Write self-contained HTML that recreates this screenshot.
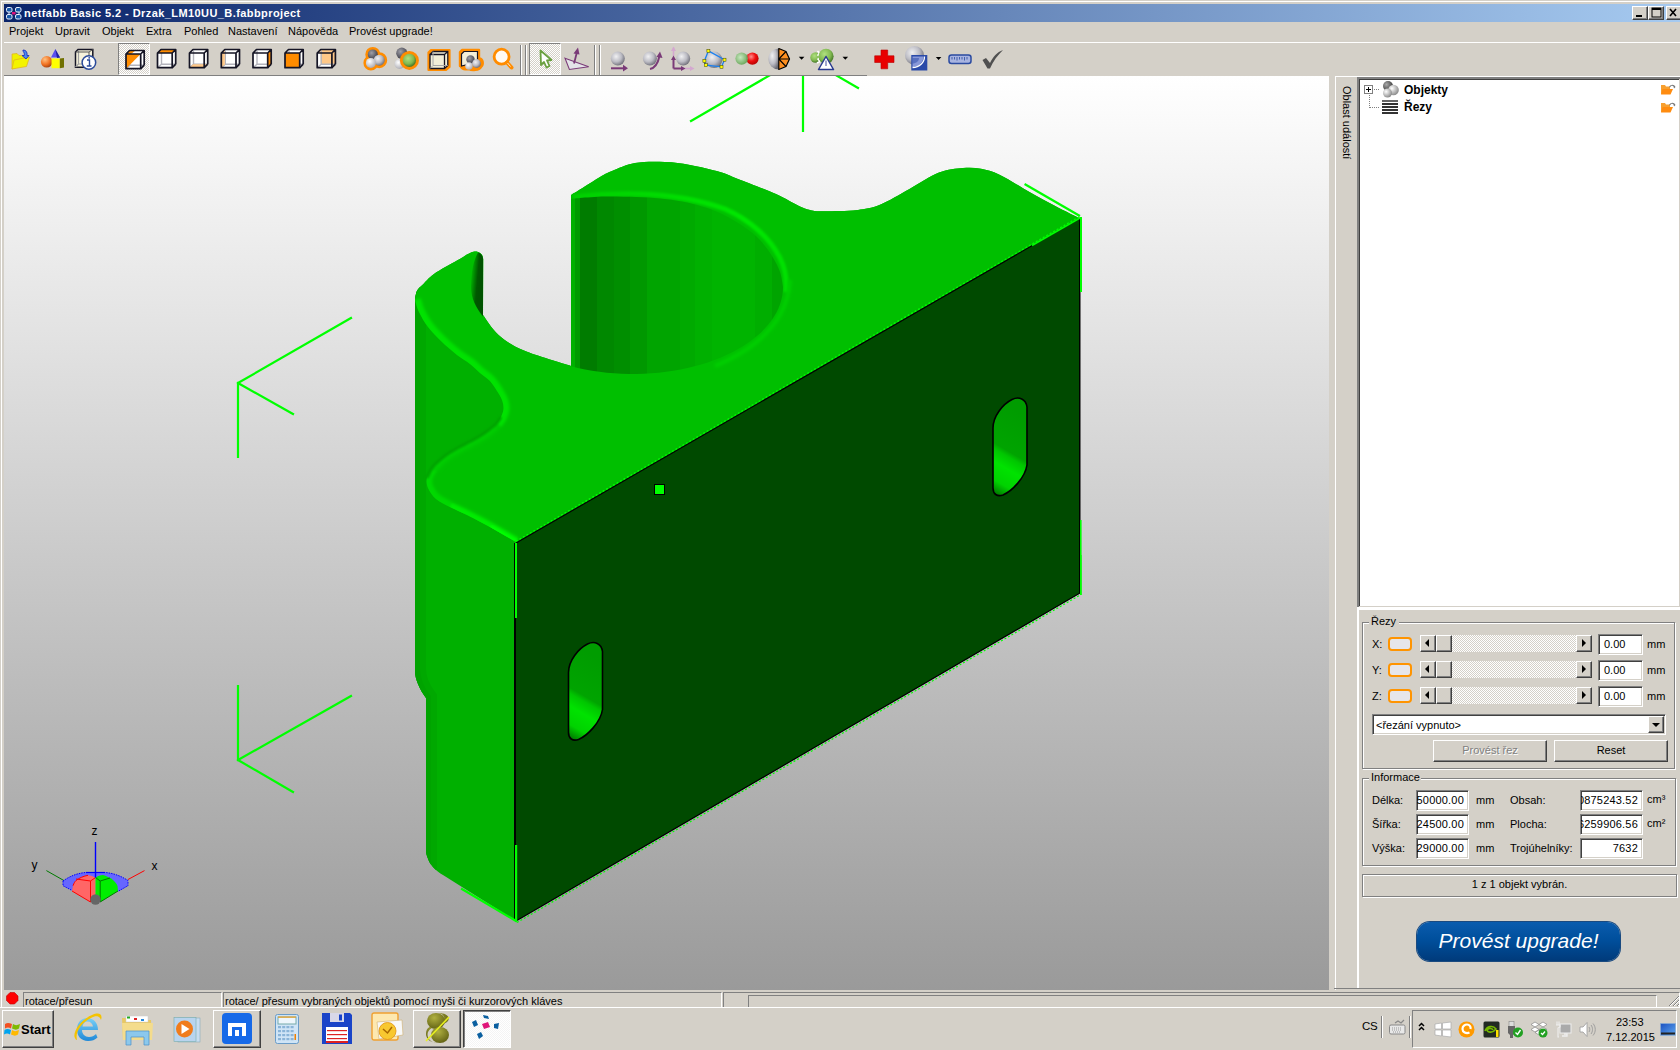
<!DOCTYPE html>
<html><head><meta charset="utf-8">
<style>
*{margin:0;padding:0;box-sizing:border-box}
html,body{width:1680px;height:1050px;overflow:hidden;background:#d4d0c8;font-family:"Liberation Sans",sans-serif;font-size:11px;color:#000}
.a{position:absolute}
.t{position:absolute;white-space:nowrap;line-height:13px}
#title{left:4px;top:4px;width:1676px;height:18px;background:linear-gradient(to right,#0a246a 0%,#a6caf0 100%)}
.tb{position:absolute;top:6px;width:16px;height:14px;background:#d4d0c8;border-top:1px solid #fff;border-left:1px solid #fff;border-right:1px solid #404040;border-bottom:1px solid #404040;box-shadow:inset -1px -1px 0 #808080}
.sunk{border-top:1px solid #808080;border-left:1px solid #808080;border-right:1px solid #fff;border-bottom:1px solid #fff}
.field{position:absolute;background:#fff;border-top:1px solid #808080;border-left:1px solid #808080;border-right:1px solid #fff;border-bottom:1px solid #fff;box-shadow:inset 1px 1px 0 #404040, inset -1px -1px 0 #d4d0c8}
.grp{position:absolute;border:1px solid #808080;box-shadow:1px 1px 0 #fff, inset 1px 1px 0 #fff}
.btn{position:absolute;background:#d4d0c8;border-top:1px solid #fff;border-left:1px solid #fff;border-right:1px solid #404040;border-bottom:1px solid #404040;box-shadow:inset -1px -1px 0 #808080;text-align:center}
</style></head><body>
<!-- outer frame -->
<div class="a" style="left:1px;top:1px;width:1679px;height:1px;background:#fff"></div>
<div class="a" style="left:1px;top:1px;width:1px;height:1007px;background:#fff"></div>
<!-- title bar -->
<div id="title" class="a"></div>
<div class="t" style="left:24px;top:6px;color:#fff;font-weight:bold;font-size:11px;line-height:15px;letter-spacing:0.42px">netfabb Basic 5.2 - Drzak_LM10UU_B.fabbproject</div>
<svg class="a" style="left:5px;top:6px" width="18" height="15" viewBox="0 0 18 15"><g fill="#1a5aa8" stroke="#e8f0ff" stroke-width="1"><rect x="1.5" y="1.5" width="5.5" height="4.5" rx="1.5"/><rect x="10.5" y="1.5" width="5.5" height="4.5" rx="1.5"/><rect x="1.5" y="8.5" width="5.5" height="4.5" rx="1.5"/><rect x="10.5" y="8.5" width="5.5" height="4.5" rx="1.5"/></g><path d="M4,6 L4,8.5 M14,6 L14,8.5" stroke="#e8f0ff" stroke-width="1"/><rect x="7" y="6" width="3.5" height="2.5" fill="#e0107a"/></svg>
<div class="tb" style="left:1632px"></div>
<div class="tb" style="left:1648px"></div>
<div class="tb" style="left:1666px"></div>
<svg class="a" style="left:1632px;top:6px" width="48" height="14"><rect x="4" y="9" width="6" height="2" fill="#000"/><rect x="20" y="2" width="9" height="9" fill="none" stroke="#000" stroke-width="1"/><rect x="20" y="2" width="9" height="2" fill="#000"/><path d="M38,3 L44,10 M44,3 L38,10" stroke="#000" stroke-width="1.6"/></svg>
<!-- menu -->
<div class="t" style="left:9px;top:25px">Projekt</div>
<div class="t" style="left:55px;top:25px">Upravit</div>
<div class="t" style="left:102px;top:25px">Objekt</div>
<div class="t" style="left:146px;top:25px">Extra</div>
<div class="t" style="left:184px;top:25px">Pohled</div>
<div class="t" style="left:228px;top:25px">Nastavení</div>
<div class="t" style="left:288px;top:25px">Nápověda</div>
<div class="t" style="left:349px;top:25px">Provést upgrade!</div>
<div class="a" style="left:4px;top:42px;width:1676px;height:1px;background:#fff"></div>
<!-- toolbar --><!--TOOL--><div class="a" style="left:118px;top:43px;width:32px;height:32px;border-top:1px solid #808080;border-left:1px solid #808080;border-right:1px solid #fff;border-bottom:1px solid #fff;background-color:#fff;background-image:conic-gradient(#d4d0c8 25%,#fff 0 50%,#d4d0c8 0 75%,#fff 0);background-size:2px 2px"></div>
<div class="a" style="left:529px;top:43px;width:32px;height:32px;border-top:1px solid #808080;border-left:1px solid #808080;border-right:1px solid #fff;border-bottom:1px solid #fff;background-color:#fff;background-image:conic-gradient(#d4d0c8 25%,#fff 0 50%,#d4d0c8 0 75%,#fff 0);background-size:2px 2px"></div>
<div class="a" style="left:520px;top:45px;width:1px;height:30px;background:#808080;box-shadow:1px 0 0 #fff"></div>
<div class="a" style="left:525px;top:45px;width:1px;height:30px;background:#808080;box-shadow:1px 0 0 #fff"></div>
<div class="a" style="left:594px;top:45px;width:1px;height:30px;background:#808080;box-shadow:1px 0 0 #fff"></div>
<div class="a" style="left:599px;top:45px;width:1px;height:30px;background:#808080;box-shadow:1px 0 0 #fff"></div><svg class="a" style="left:0;top:43px" width="1010" height="32" viewBox="0 43 1010 32"><defs>
<radialGradient id="gs" cx="0.38" cy="0.35" r="0.7"><stop offset="0" stop-color="#f0f0f2"/><stop offset="0.55" stop-color="#bcbcc4"/><stop offset="1" stop-color="#6a6a74"/></radialGradient>
<radialGradient id="gsd" cx="0.38" cy="0.35" r="0.7"><stop offset="0" stop-color="#a0a0a8"/><stop offset="1" stop-color="#3a3a44"/></radialGradient>
<radialGradient id="gsw" cx="0.38" cy="0.35" r="0.7"><stop offset="0" stop-color="#ffffff"/><stop offset="1" stop-color="#a8a8b0"/></radialGradient>
<radialGradient id="ggr" cx="0.4" cy="0.35" r="0.7"><stop offset="0" stop-color="#b0e080"/><stop offset="0.6" stop-color="#80b850"/><stop offset="1" stop-color="#3a6a20"/></radialGradient>
<radialGradient id="ggl" cx="0.4" cy="0.4" r="0.7"><stop offset="0" stop-color="#c8e8c0"/><stop offset="1" stop-color="#60a050"/></radialGradient>
<radialGradient id="grd" cx="0.4" cy="0.35" r="0.7"><stop offset="0" stop-color="#ff9090"/><stop offset="0.5" stop-color="#f01010"/><stop offset="1" stop-color="#b00000"/></radialGradient>
<radialGradient id="gor" cx="0.35" cy="0.3" r="0.75"><stop offset="0" stop-color="#ffc080"/><stop offset="0.6" stop-color="#f07020"/><stop offset="1" stop-color="#a04010"/></radialGradient>
</defs><path d="M126,54 L129.5,50.5 L144.2,50.5 L144.2,65.2 L140.7,68.7 L126,68.7 Z" fill="#fff"/><path d="M130.0,51.5 L130.0,65.2 L143.2,65.2 M126.5,68.2 L130.0,65.2" stroke="#b4b4bc" stroke-width="1.4" fill="none"/><path d="M126,54 L140.7,54 L126,68.7 Z" fill="#ff8c00"/><path d="M126,54 L129.5,50.5 L135.5,50.5 L131,54 Z" fill="#ff8c00"/><path d="M126,54 L140.7,54 L140.7,68.7 L126,68.7 Z M126,54 L129.5,50.5 L144.2,50.5 L144.2,65.2 M140.7,54 L144.2,50.5" stroke="#151525" stroke-width="1.7" fill="none" stroke-linejoin="round"/><path d="M140.7,68.7 L144.2,65.2" stroke="#151525" stroke-width="1.7"/><path d="M157.5,53 L161.0,49.5 L175.7,49.5 L175.7,64.2 L172.2,67.7 L157.5,67.7 Z" fill="#fff"/><path d="M161.5,50.5 L161.5,64.2 L174.7,64.2 M158.0,67.2 L161.5,64.2" stroke="#b4b4bc" stroke-width="1.4" fill="none"/><path d="M157.5,53 L161.0,49.5 L175.7,49.5 L172.2,53 Z" fill="#ff8c00"/><path d="M157.5,53 L172.2,53 L172.2,67.7 L157.5,67.7 Z M157.5,53 L161.0,49.5 L175.7,49.5 L175.7,64.2 M172.2,53 L175.7,49.5" stroke="#151525" stroke-width="1.7" fill="none" stroke-linejoin="round"/><path d="M172.2,67.7 L175.7,64.2" stroke="#151525" stroke-width="1.7"/><path d="M189.5,53 L193.0,49.5 L207.7,49.5 L207.7,64.2 L204.2,67.7 L189.5,67.7 Z" fill="#fff"/><path d="M193.5,50.5 L193.5,64.2 L206.7,64.2 M190.0,67.2 L193.5,64.2" stroke="#b4b4bc" stroke-width="1.4" fill="none"/><path d="M189.5,67.7 L193.0,64.2 L207.7,64.2 L204.2,67.7 Z" fill="#ffc888"/><path d="M189.5,53 L204.2,53 L204.2,67.7 L189.5,67.7 Z M189.5,53 L193.0,49.5 L207.7,49.5 L207.7,64.2 M204.2,53 L207.7,49.5" stroke="#151525" stroke-width="1.7" fill="none" stroke-linejoin="round"/><path d="M204.2,67.7 L207.7,64.2" stroke="#151525" stroke-width="1.7"/><path d="M221.3,53 L224.8,49.5 L239.5,49.5 L239.5,64.2 L236.0,67.7 L221.3,67.7 Z" fill="#fff"/><path d="M225.3,50.5 L225.3,64.2 L238.5,64.2 M221.8,67.2 L225.3,64.2" stroke="#b4b4bc" stroke-width="1.4" fill="none"/><path d="M221.3,53 L224.8,49.5 L224.8,64.2 L221.3,67.7 Z" fill="#ffc888"/><path d="M221.3,53 L236.0,53 L236.0,67.7 L221.3,67.7 Z M221.3,53 L224.8,49.5 L239.5,49.5 L239.5,64.2 M236.0,53 L239.5,49.5" stroke="#151525" stroke-width="1.7" fill="none" stroke-linejoin="round"/><path d="M236.0,67.7 L239.5,64.2" stroke="#151525" stroke-width="1.7"/><path d="M253,53 L256.5,49.5 L271.2,49.5 L271.2,64.2 L267.7,67.7 L253,67.7 Z" fill="#fff"/><path d="M257.0,50.5 L257.0,64.2 L270.2,64.2 M253.5,67.2 L257.0,64.2" stroke="#b4b4bc" stroke-width="1.4" fill="none"/><path d="M267.7,53 L271.2,49.5 L271.2,64.2 L267.7,67.7 Z" fill="#ff8c00"/><path d="M253,53 L267.7,53 L267.7,67.7 L253,67.7 Z M253,53 L256.5,49.5 L271.2,49.5 L271.2,64.2 M267.7,53 L271.2,49.5" stroke="#151525" stroke-width="1.7" fill="none" stroke-linejoin="round"/><path d="M267.7,67.7 L271.2,64.2" stroke="#151525" stroke-width="1.7"/><path d="M285,53 L288.5,49.5 L303.2,49.5 L303.2,64.2 L299.7,67.7 L285,67.7 Z" fill="#fff"/><path d="M289.0,50.5 L289.0,64.2 L302.2,64.2 M285.5,67.2 L289.0,64.2" stroke="#b4b4bc" stroke-width="1.4" fill="none"/><rect x="285" y="53" width="14.7" height="14.7" fill="#ff8c00"/><path d="M285,53 L299.7,53 L299.7,67.7 L285,67.7 Z M285,53 L288.5,49.5 L303.2,49.5 L303.2,64.2 M299.7,53 L303.2,49.5" stroke="#151525" stroke-width="1.7" fill="none" stroke-linejoin="round"/><path d="M299.7,67.7 L303.2,64.2" stroke="#151525" stroke-width="1.7"/><path d="M317.2,53 L320.7,49.5 L335.4,49.5 L335.4,64.2 L331.9,67.7 L317.2,67.7 Z" fill="#fff"/><path d="M317.2,53 L320.7,49.5 L335.4,49.5 L335.4,64.2 L331.9,67.7 L331.9,53 Z" fill="#ffc888"/><rect x="320.7" y="49.5" width="14.7" height="14.7" fill="#ffc888"/><rect x="318.2" y="64.2" width="3.5" height="2.5" fill="#fff"/><rect x="318.2" y="64.2" width="13.7" height="2.5" fill="#fff"/><path d="M321.2,50.5 L321.2,64.2 L334.4,64.2 M317.7,67.2 L321.2,64.2" stroke="#b4b4bc" stroke-width="1.4" fill="none"/><path d="M317.2,53 L331.9,53 L331.9,67.7 L317.2,67.7 Z M317.2,53 L320.7,49.5 L335.4,49.5 L335.4,64.2 M331.9,53 L335.4,49.5" stroke="#151525" stroke-width="1.7" fill="none" stroke-linejoin="round"/><path d="M331.9,67.7 L335.4,64.2" stroke="#151525" stroke-width="1.7"/><path d="M12,54 L17,53.5 L19,55.5 L26,55.5 L26,64 L12,69 Z" fill="#f0f000" stroke="#e0b020" stroke-width="0.7"/><path d="M12,69 L14,60 L29.5,57 L26.5,66.5 Z" fill="#f4f400" stroke="#e0b020" stroke-width="0.7"/><path d="M23,50 C26,50 27.5,52 27,55.5 L29,55.5 L26,59 L22,55.5 L24.3,55.5 C24.5,53 24,52 23,51.5 Z" fill="#4a8af0" stroke="#2030c0" stroke-width="0.9"/><path d="M55.3,49 L60,57.5 L51,57.5 Z" fill="#5a50f0"/><path d="M55.3,49 L60,57.5 L57,58 Z" fill="#2020a0"/><circle cx="46.7" cy="61.8" r="5.8" fill="url(#gor)"/><path d="M51.5,58.5 L59.8,58.5 L59.8,68.2 L51.5,68.2 Z" fill="#ffff00"/><path d="M59.8,58.5 L64,58 L64,67.5 L59.8,68.2 Z" fill="#707000"/><path d="M75.5,52 L78,49.5 L92.8,49.5 L92.8,64.5 L89,67.2 L75.5,67.2 Z" fill="#f6f2dc" stroke="#151525" stroke-width="1.5"/><path d="M78.5,50 L78.5,64 L92,64 M75.5,67 L78.5,64" stroke="#a0a0a0" stroke-width="1.2" fill="none"/><path d="M75.5,52 L89,52 L89,67 M89,52 L92.8,49.5" stroke="#555" stroke-width="1" fill="none"/><circle cx="88.9" cy="62.5" r="6.8" fill="#fff" stroke="#2a4a9a" stroke-width="1.5"/><path d="M87,60 L89.5,60 L89.5,66 M86.8,66 L91.5,66" stroke="#2a4a9a" stroke-width="1.4" fill="none"/><circle cx="89.2" cy="57.8" r="0.9" fill="#2a4a9a"/><g stroke="#ff8c00" stroke-width="5" fill="#ff8c00"><circle cx="372.8" cy="54.4" r="5"/><circle cx="379.2" cy="60.2" r="5.5"/><circle cx="370.9" cy="62.9" r="5"/></g><circle cx="372.8" cy="54.4" r="5" fill="url(#gsd)"/><circle cx="379.2" cy="60.2" r="5.5" fill="url(#gs)"/><circle cx="370.9" cy="62.9" r="5" fill="url(#gsw)"/><circle cx="401.8" cy="53.2" r="5.6" fill="url(#gsd)"/><circle cx="399.5" cy="64" r="5" fill="url(#gsw)"/><circle cx="409.4" cy="60.4" r="9.5" fill="#ff8c00"/><circle cx="409.4" cy="60.4" r="6.6" fill="url(#ggr)"/><path d="M431,50 L449.5,50 L449.5,67 L446,70 L428.5,70 L428.5,52.5 Z" fill="#ff8c00" stroke="#ff8c00" stroke-width="2.2" stroke-linejoin="round"/><path d="M432,51.5 L447.8,51.5 L447.8,65.5 L444.5,68.5 L430,68.5 L430,54.5 Z" fill="#f2eed8"/><path d="M430,54.5 L444.5,54.5 L444.5,68.5 L430,68.5 Z M430,54.5 L433,51.5 L447.8,51.5 L447.8,65.5 L444.5,68.5 M444.5,54.5 L447.8,51.5" stroke="#151525" stroke-width="1.3" fill="none"/><path d="M433,51.5 L433,65.5 L447.8,65.5 M430,68.5 L433,65.5" stroke="#a8a8a8" stroke-width="1" fill="none"/><path d="M462,50 L479,50 L479,58 C483,59 484,64 481,67 C479,70 472,71 469,69 C466,70 461,69 461,66 L460,66 L460,52 Z" fill="#ff8c00" stroke="#ff8c00" stroke-width="2.4" stroke-linejoin="round"/><path d="M461.5,54 L464,51.5 L477.5,51.5 L477.5,62 L461.5,66 Z" fill="#f2eed8" stroke="#151525" stroke-width="1.2"/><circle cx="470.5" cy="59.5" r="4.2" fill="url(#gsd)"/><circle cx="476.5" cy="63.5" r="4.4" fill="url(#gs)"/><circle cx="469" cy="66" r="3.8" fill="url(#gsw)"/><circle cx="501.6" cy="56.7" r="7.5" fill="#fffaf4" stroke="#ff8c00" stroke-width="2.8"/><path d="M507,62.5 L511.5,67.5" stroke="#ff8c00" stroke-width="4" stroke-linecap="round"/><path d="M507.5,63 L510.5,66.5" stroke="#ffe8c8" stroke-width="1"/><path d="M540.5,50.5 L551.5,60 L547,60.5 L549.5,66 L546.5,67.5 L544,62 L541,65 Z" fill="#fff" stroke="#6aa040" stroke-width="1.8" stroke-linejoin="round"/><path d="M565,58.3 L588.7,66.8 L569.4,69.5 Z" fill="#e4e4e8" stroke="#7a3a78" stroke-width="1.1"/><path d="M574,63.5 L577,52" stroke="#7a3a78" stroke-width="1.8"/><path d="M573.5,53.5 L578,47.5 L579.5,54.5 Z" fill="#7a3a78"/><circle cx="617.8" cy="58.6" r="7" fill="url(#gs)"/><path d="M611,68.3 L624,68.3" stroke="#7a3a78" stroke-width="2"/><path d="M623,64.8 L628,68.3 L623,71.5 Z" fill="#7a3a78"/><circle cx="649.9" cy="58.6" r="7" fill="url(#gs)"/><path d="M650,69 C655,68 658,63 659.5,56" stroke="#7a3a78" stroke-width="2" fill="none"/><path d="M656.5,57 L660,51.5 L662.5,58 Z" fill="#7a3a78"/><circle cx="683.2" cy="58.6" r="7" fill="url(#gs)"/><path d="M673.5,47.5 L673.5,56" stroke="#d4a8d0" stroke-width="1.6"/><path d="M671,51 L673.5,46.5 L676,51 Z" fill="#d4a8d0"/><path d="M684,68.5 L691,68.5" stroke="#d4a8d0" stroke-width="1.6"/><path d="M690,66 L694.5,68.5 L690,71 Z" fill="#d4a8d0"/><path d="M673.5,68.5 L673.5,58 M673.5,68.5 L682,68.5" stroke="#7a3a78" stroke-width="2" fill="none"/><path d="M671,60 L673.5,55.5 L676,60 Z M681,66 L685.5,68.5 L681,71 Z" fill="#7a3a78"/><circle cx="714" cy="59.8" r="8.3" fill="url(#gs)"/><path d="M708.4,50.9 L724.5,59.7 L721.5,66.8 L705.8,65.2 L704.4,60.8 Z" fill="none" stroke="#1a80f0" stroke-width="1.3"/><rect x="706.9" y="49.4" width="3" height="3" fill="#ffff00" stroke="#404000" stroke-width="0.5"/><rect x="723.0" y="58.2" width="3" height="3" fill="#ffff00" stroke="#404000" stroke-width="0.5"/><rect x="720.0" y="65.3" width="3" height="3" fill="#ffff00" stroke="#404000" stroke-width="0.5"/><rect x="704.3" y="63.7" width="3" height="3" fill="#ffff00" stroke="#404000" stroke-width="0.5"/><rect x="702.9" y="59.3" width="3" height="3" fill="#ffff00" stroke="#404000" stroke-width="0.5"/><circle cx="752.4" cy="58.6" r="6.2" fill="url(#grd)"/><circle cx="741.6" cy="58.6" r="6.2" fill="url(#ggl)"/><path d="M746.8,55 L746.8,62.5" stroke="#70a060" stroke-width="0.8"/><path d="M778.8,48.5 A10.5,10.5 0 0 0 778.8,69.5 Z" fill="url(#gs)"/><path d="M778.8,48.5 L786,51.5 L789.5,59 L786,66.5 L778.8,69.5 Z" fill="#ff9020" stroke="#000" stroke-width="1.2" stroke-linejoin="round"/><path d="M778.8,59 L789.5,59 M778.8,59 L786,51.5 M778.8,59 L786,66.5" stroke="#000" stroke-width="1.1"/><path d="M798.8,56.8 L804.4,56.8 L801.6,59.8 Z" fill="#000"/><circle cx="815.5" cy="57.5" r="5.2" fill="url(#ggr)"/><path d="M817.5,51 L819.5,53 L818,55 L820.5,57 L818,59 L820,61.5 L817,63" stroke="#fff" stroke-width="1.6" fill="none"/><circle cx="826" cy="56.3" r="7.6" fill="url(#ggr)"/><path d="M826,56.5 L833.5,69.5 L818.5,69.5 Z" fill="#fff" stroke="#2a3a90" stroke-width="1.5" stroke-linejoin="round"/><path d="M826,60.5 L826,66" stroke="#2a3a90" stroke-width="0.9"/><path d="M842.5,56.8 L848.1,56.8 L845.3,59.8 Z" fill="#000"/><path d="M881,50 L887.7,50 L887.7,55.8 L894,55.8 L894,62.5 L887.7,62.5 L887.7,68.8 L881,68.8 L881,62.5 L874.7,62.5 L874.7,55.8 L881,55.8 Z" fill="#e80000" stroke="#b80000" stroke-width="0.6"/><circle cx="914.5" cy="55.4" r="9.5" fill="url(#gs)"/><rect x="911.3" y="55" width="16" height="15.5" fill="#2a4aa8"/><path d="M912.5,56.5 L923.5,56.5 C923.5,62 919,67 912.5,67 Z" fill="#8898d8"/><path d="M912.5,67.5 C919.5,67.5 924.5,62.5 924.5,56.5" stroke="#fff" stroke-width="1.3" fill="none"/><path d="M912.5,58 L919,58 C919,61 916,63.5 912.5,63.5 Z" fill="#2a4aa8" opacity="0.5"/><path d="M935.8,57 L941.4,57 L938.6,60 Z" fill="#000"/><rect x="949" y="55" width="22" height="8.4" rx="2.5" fill="#a8b4e0" stroke="#2a4aa0" stroke-width="1.5"/><path d="M952,57 L952,59.5 M954.5,57 L954.5,59.5 M957,57 L957,60.5 M959.5,57 L959.5,59.5 M962,57 L962,59.5 M964.5,57 L964.5,60.5 M967,57 L967,59.5" stroke="#2a4aa0" stroke-width="0.8"/><path d="M982.5,60 L986,58 L990,63 C993,57 997,52 1003,50 C998,55 993,61 990,68.5 L987.5,68.5 Z" fill="#505050"/></svg><!--/TOOL-->
<!-- toolbar bottom line -->
<div class="a" style="left:4px;top:75px;width:863px;height:1px;background:#808080"></div>

<!-- viewport -->
<!--VP--><svg class="a" style="left:4px;top:76px" width="1325" height="914" viewBox="4 76 1325 914"><defs><linearGradient id="vpbg" x1="0" y1="0" x2="0" y2="1"><stop offset="0" stop-color="#ffffff"/><stop offset="1" stop-color="#9a9a9a"/></linearGradient></defs><rect x="4" y="76" width="1325" height="914" fill="url(#vpbg)"/><defs><clipPath id="silc0"><path d="M415.0,300.0 C415.3,298.5 415.7,293.6 417.0,291.0 C418.3,288.4 420.2,287.4 423.0,284.6 C425.8,281.8 428.3,278.0 434.0,274.0 C439.7,270.0 450.8,264.2 457.0,260.6 C463.2,257.0 467.5,254.0 471.0,252.6 C474.5,251.2 476.2,251.6 478.0,252.0 C479.8,252.4 481.1,253.8 482.0,255.0 C482.9,256.2 483.0,258.3 483.2,259.0 L483,315 C485.6,318.3 491.8,329.1 498.6,335.0 C505.4,340.9 511.9,345.4 524.0,350.6 C536.1,355.8 563.2,363.4 571.0,366.0 L571,195 C573.2,193.7 579.2,190.0 584.0,187.0 C588.8,184.0 595.3,179.7 600.0,177.0 C604.7,174.3 606.2,173.3 612.0,171.0 C617.8,168.7 626.2,164.5 635.0,163.0 C643.8,161.5 655.8,161.7 665.0,162.0 C674.2,162.3 680.8,163.3 690.0,165.0 C699.2,166.7 712.0,169.7 720.0,172.0 C728.0,174.3 728.7,175.3 738.0,179.0 C747.3,182.7 765.8,189.5 776.0,194.0 C786.2,198.5 793.0,203.2 799.0,206.0 C805.0,208.8 808.2,209.6 812.0,210.5 C815.8,211.4 817.3,211.2 822.0,211.3 C826.7,211.4 834.0,211.2 840.0,211.0 C846.0,210.8 851.3,211.0 858.0,210.0 C864.7,209.0 871.4,208.3 880.0,204.8 C888.6,201.3 899.7,194.4 909.5,189.0 C919.3,183.6 930.1,176.1 939.0,172.6 C947.9,169.1 956.0,168.6 963.0,168.0 C970.0,167.4 975.0,167.7 981.0,168.8 C987.0,169.9 992.0,171.3 999.0,174.5 C1006.0,177.7 1014.5,183.4 1023.0,188.2 C1031.5,193.0 1040.5,198.2 1050.0,203.3 C1059.5,208.4 1075.0,216.0 1080.0,218.5 L1080,593 L516,921 L443,875 C436,871 431,866 428.5,860 C427,856 426,854 426,850 L426,698 C423,694 420,689 418,684 C416,679 415,675 415,671 Z"/></clipPath></defs>
<path d="M415.0,300.0 C415.3,298.5 415.7,293.6 417.0,291.0 C418.3,288.4 420.2,287.4 423.0,284.6 C425.8,281.8 428.3,278.0 434.0,274.0 C439.7,270.0 450.8,264.2 457.0,260.6 C463.2,257.0 467.5,254.0 471.0,252.6 C474.5,251.2 476.2,251.6 478.0,252.0 C479.8,252.4 481.1,253.8 482.0,255.0 C482.9,256.2 483.0,258.3 483.2,259.0 L483,315 C485.6,318.3 491.8,329.1 498.6,335.0 C505.4,340.9 511.9,345.4 524.0,350.6 C536.1,355.8 563.2,363.4 571.0,366.0 L571,195 C573.2,193.7 579.2,190.0 584.0,187.0 C588.8,184.0 595.3,179.7 600.0,177.0 C604.7,174.3 606.2,173.3 612.0,171.0 C617.8,168.7 626.2,164.5 635.0,163.0 C643.8,161.5 655.8,161.7 665.0,162.0 C674.2,162.3 680.8,163.3 690.0,165.0 C699.2,166.7 712.0,169.7 720.0,172.0 C728.0,174.3 728.7,175.3 738.0,179.0 C747.3,182.7 765.8,189.5 776.0,194.0 C786.2,198.5 793.0,203.2 799.0,206.0 C805.0,208.8 808.2,209.6 812.0,210.5 C815.8,211.4 817.3,211.2 822.0,211.3 C826.7,211.4 834.0,211.2 840.0,211.0 C846.0,210.8 851.3,211.0 858.0,210.0 C864.7,209.0 871.4,208.3 880.0,204.8 C888.6,201.3 899.7,194.4 909.5,189.0 C919.3,183.6 930.1,176.1 939.0,172.6 C947.9,169.1 956.0,168.6 963.0,168.0 C970.0,167.4 975.0,167.7 981.0,168.8 C987.0,169.9 992.0,171.3 999.0,174.5 C1006.0,177.7 1014.5,183.4 1023.0,188.2 C1031.5,193.0 1040.5,198.2 1050.0,203.3 C1059.5,208.4 1075.0,216.0 1080.0,218.5 L1080,593 L516,921 L443,875 C436,871 431,866 428.5,860 C427,856 426,854 426,850 L426,698 C423,694 420,689 418,684 C416,679 415,675 415,671 Z" fill="#00b000"/>
<g clip-path="url(#silc0)"><path d="M415,280 L415,668 C415,675 416,679 418,684 C420,689 423,694 426,698 L426,870" fill="none" stroke="#00a800" stroke-width="22"/><path d="M415,280 L415,668 C415,675 416,679 418,684 C420,689 423,694 426,698 L426,870" fill="none" stroke="#00a300" stroke-width="10"/></g>
<path d="M516,542 C511.7,539.5 498.5,531.7 490.0,527.0 C481.5,522.3 471.7,517.3 465.0,514.0 C458.3,510.7 454.8,509.5 450.0,507.0 C445.2,504.5 439.7,502.2 436.0,499.0 C432.3,495.8 429.5,491.5 428.0,488.0 C426.5,484.5 426.3,481.3 427.0,478.0 C427.7,474.7 429.8,471.0 432.0,468.0 C434.2,465.0 437.2,462.5 440.0,460.0 C442.8,457.5 445.7,455.2 449.0,453.0 C452.3,450.8 456.5,448.6 460.0,446.7 C463.5,444.8 466.7,443.3 470.0,441.5 C473.3,439.7 477.0,437.8 480.0,436.0 C483.0,434.2 485.3,432.5 488.0,430.5 C490.7,428.5 493.8,426.2 496.0,424.0 C498.2,421.8 499.8,419.5 501.0,417.0 C502.2,414.5 503.3,411.8 503.5,409.0 C503.7,406.2 503.1,403.0 502.0,400.0 C500.9,397.0 499.0,394.2 497.0,391.0 C495.0,387.8 492.8,384.0 490.0,381.0 C487.2,378.0 483.3,375.8 480.0,373.0 C476.7,370.2 473.8,367.0 470.0,364.0 C466.2,361.0 461.8,358.8 457.0,355.0 C452.2,351.2 445.8,345.7 441.0,341.0 C436.2,336.3 431.7,331.8 428.0,327.0 C424.3,322.2 421.2,316.5 419.0,312.0 C416.8,307.5 415.7,302.0 415.0,300.0 C415.3,298.5 415.7,293.6 417.0,291.0 C418.3,288.4 420.2,287.4 423.0,284.6 C425.8,281.8 428.3,278.0 434.0,274.0 C439.7,270.0 450.8,264.2 457.0,260.6 C463.2,257.0 467.5,254.0 471.0,252.6 C474.5,251.2 476.2,251.6 478.0,252.0 C479.8,252.4 481.1,253.8 482.0,255.0 C482.9,256.2 483.0,258.3 483.2,259.0 L483,315 C485.6,318.3 491.8,329.1 498.6,335.0 C505.4,340.9 511.9,345.4 524.0,350.6 C536.1,355.8 563.2,363.4 571.0,366.0 L571,195 C573.2,193.7 579.2,190.0 584.0,187.0 C588.8,184.0 595.3,179.7 600.0,177.0 C604.7,174.3 606.2,173.3 612.0,171.0 C617.8,168.7 626.2,164.5 635.0,163.0 C643.8,161.5 655.8,161.7 665.0,162.0 C674.2,162.3 680.8,163.3 690.0,165.0 C699.2,166.7 712.0,169.7 720.0,172.0 C728.0,174.3 728.7,175.3 738.0,179.0 C747.3,182.7 765.8,189.5 776.0,194.0 C786.2,198.5 793.0,203.2 799.0,206.0 C805.0,208.8 808.2,209.6 812.0,210.5 C815.8,211.4 817.3,211.2 822.0,211.3 C826.7,211.4 834.0,211.2 840.0,211.0 C846.0,210.8 851.3,211.0 858.0,210.0 C864.7,209.0 871.4,208.3 880.0,204.8 C888.6,201.3 899.7,194.4 909.5,189.0 C919.3,183.6 930.1,176.1 939.0,172.6 C947.9,169.1 956.0,168.6 963.0,168.0 C970.0,167.4 975.0,167.7 981.0,168.8 C987.0,169.9 992.0,171.3 999.0,174.5 C1006.0,177.7 1014.5,183.4 1023.0,188.2 C1031.5,193.0 1040.5,198.2 1050.0,203.3 C1059.5,208.4 1075.0,216.0 1080.0,218.5 Z" fill="#00bf00"/>
<defs><linearGradient id="tabw" x1="0.1" y1="0.05" x2="0.75" y2="0.35"><stop offset="0" stop-color="#00bf00"/><stop offset="0.45" stop-color="#008000"/><stop offset="0.75" stop-color="#005800"/><stop offset="1" stop-color="#005200"/></linearGradient></defs>
<path d="M478,252.5 C473,261 471,274 471,287 C471,298 476,308 483,316.5 L483.2,259 C482.5,255 480.5,252.5 478,252.5 Z" fill="url(#tabw)" filter="url(#bl05)" clip-path="url(#silc0)"/>
<defs><clipPath id="borec"><rect x="571" y="150" width="300" height="300"/></clipPath><linearGradient id="bore" gradientUnits="userSpaceOnUse" x1="571" x2="783" y1="0" y2="0"><stop offset="0.0000" stop-color="#00b000"/><stop offset="0.0189" stop-color="#00b000"/><stop offset="0.0189" stop-color="#009a00"/><stop offset="0.0425" stop-color="#009a00"/><stop offset="0.0425" stop-color="#007c00"/><stop offset="0.1203" stop-color="#007c00"/><stop offset="0.1203" stop-color="#008800"/><stop offset="0.2028" stop-color="#008800"/><stop offset="0.2028" stop-color="#008e00"/><stop offset="0.2783" stop-color="#008e00"/><stop offset="0.2783" stop-color="#009800"/><stop offset="0.3585" stop-color="#009800"/><stop offset="0.3585" stop-color="#00a400"/><stop offset="0.5142" stop-color="#00a400"/><stop offset="0.5142" stop-color="#00aa00"/><stop offset="0.5849" stop-color="#00aa00"/><stop offset="0.5849" stop-color="#00b000"/><stop offset="0.6651" stop-color="#00b000"/><stop offset="0.6651" stop-color="#00b400"/><stop offset="0.8679" stop-color="#00b400"/><stop offset="0.8679" stop-color="#00ae00"/><stop offset="0.9481" stop-color="#00ae00"/><stop offset="0.9481" stop-color="#00a400"/><stop offset="1.0000" stop-color="#00a400"/></linearGradient><filter id="bl1" x="-10%" y="-10%" width="120%" height="120%"><feGaussianBlur stdDeviation="1"/></filter><filter id="bl15" x="-10%" y="-10%" width="120%" height="120%"><feGaussianBlur stdDeviation="1.5"/></filter><filter id="bl2" x="-10%" y="-10%" width="120%" height="120%"><feGaussianBlur stdDeviation="2.2"/></filter><filter id="bl05" x="-10%" y="-10%" width="120%" height="120%"><feGaussianBlur stdDeviation="0.6"/></filter></defs>
<defs><linearGradient id="rimg" gradientUnits="userSpaceOnUse" x1="571" y1="0" x2="790" y2="0"><stop offset="0" stop-color="#00d000"/><stop offset="0.4" stop-color="#00dc00"/><stop offset="0.8" stop-color="#00e800"/><stop offset="1" stop-color="#00e000"/></linearGradient></defs>
<defs><clipPath id="rimc"><path d="M571,150 L871,150 L871,300 L790,300 L760,330 L571,290 Z"/></clipPath></defs>
<path d="M573,197 C590,195 620,193.5 640,194 C670,195 700,200 725,209 C750,220 770,238 780,258 C786,270 787,280 786,292" fill="none" stroke="url(#rimg)" stroke-width="5" filter="url(#bl1)"/>
<path d="M790,280 C788,315 765,345 715,366" fill="none" stroke="#00cf00" stroke-width="4" filter="url(#bl15)"/>
<path d="M571.0,199.0 C572.5,198.8 574.3,198.4 580.0,198.0 C585.7,197.6 595.7,196.7 605.0,196.5 C614.3,196.3 626.8,196.7 636.0,197.0 C645.2,197.3 652.3,197.8 660.0,198.5 C667.7,199.2 675.0,200.2 682.0,201.5 C689.0,202.8 695.7,204.6 702.0,206.5 C708.3,208.4 713.2,209.8 720.0,213.0 C726.8,216.2 736.3,221.5 743.0,226.0 C749.7,230.5 755.2,235.0 760.0,240.0 C764.8,245.0 768.7,250.7 772.0,256.0 C775.3,261.3 778.2,266.8 780.0,272.0 C781.8,277.2 782.5,284.5 783.0,287.0 L783.0,287.0 L782.8,291.3 L782.3,295.7 L781.3,300.0 L780.0,304.3 L778.4,308.5 L776.3,312.7 L773.9,316.8 L771.2,320.8 L768.1,324.8 L764.7,328.6 L761.0,332.4 L756.9,336.1 L752.5,339.6 L747.8,343.0 L742.9,346.2 L737.6,349.3 L732.2,352.3 L726.4,355.1 L720.4,357.7 L714.3,360.1 L707.9,362.4 L701.3,364.5 L694.5,366.3 L687.6,368.0 L680.6,369.5 L673.4,370.8 L666.2,371.8 L658.8,372.7 L651.4,373.3 L644.0,373.8 L636.5,374.0 L629.0,374.0 L621.5,373.7 L614.1,373.3 L606.7,372.7 L599.4,371.8 L592.1,370.7 L585.0,369.4 L577.9,367.9 L571.0,366.2 Z" fill="url(#bore)"/>
<defs><clipPath id="topc"><path d="M516,542 C511.7,539.5 498.5,531.7 490.0,527.0 C481.5,522.3 471.7,517.3 465.0,514.0 C458.3,510.7 454.8,509.5 450.0,507.0 C445.2,504.5 439.7,502.2 436.0,499.0 C432.3,495.8 429.5,491.5 428.0,488.0 C426.5,484.5 426.3,481.3 427.0,478.0 C427.7,474.7 429.8,471.0 432.0,468.0 C434.2,465.0 437.2,462.5 440.0,460.0 C442.8,457.5 445.7,455.2 449.0,453.0 C452.3,450.8 456.5,448.6 460.0,446.7 C463.5,444.8 466.7,443.3 470.0,441.5 C473.3,439.7 477.0,437.8 480.0,436.0 C483.0,434.2 485.3,432.5 488.0,430.5 C490.7,428.5 493.8,426.2 496.0,424.0 C498.2,421.8 499.8,419.5 501.0,417.0 C502.2,414.5 503.3,411.8 503.5,409.0 C503.7,406.2 503.1,403.0 502.0,400.0 C500.9,397.0 499.0,394.2 497.0,391.0 C495.0,387.8 492.8,384.0 490.0,381.0 C487.2,378.0 483.3,375.8 480.0,373.0 C476.7,370.2 473.8,367.0 470.0,364.0 C466.2,361.0 461.8,358.8 457.0,355.0 C452.2,351.2 445.8,345.7 441.0,341.0 C436.2,336.3 431.7,331.8 428.0,327.0 C424.3,322.2 421.2,316.5 419.0,312.0 C416.8,307.5 415.7,302.0 415.0,300.0 C415.3,298.5 415.7,293.6 417.0,291.0 C418.3,288.4 420.2,287.4 423.0,284.6 C425.8,281.8 428.3,278.0 434.0,274.0 C439.7,270.0 450.8,264.2 457.0,260.6 C463.2,257.0 467.5,254.0 471.0,252.6 C474.5,251.2 476.2,251.6 478.0,252.0 C479.8,252.4 481.1,253.8 482.0,255.0 C482.9,256.2 483.0,258.3 483.2,259.0 L483,315 C485.6,318.3 491.8,329.1 498.6,335.0 C505.4,340.9 511.9,345.4 524.0,350.6 C536.1,355.8 563.2,363.4 571.0,366.0 L571,195 C573.2,193.7 579.2,190.0 584.0,187.0 C588.8,184.0 595.3,179.7 600.0,177.0 C604.7,174.3 606.2,173.3 612.0,171.0 C617.8,168.7 626.2,164.5 635.0,163.0 C643.8,161.5 655.8,161.7 665.0,162.0 C674.2,162.3 680.8,163.3 690.0,165.0 C699.2,166.7 712.0,169.7 720.0,172.0 C728.0,174.3 728.7,175.3 738.0,179.0 C747.3,182.7 765.8,189.5 776.0,194.0 C786.2,198.5 793.0,203.2 799.0,206.0 C805.0,208.8 808.2,209.6 812.0,210.5 C815.8,211.4 817.3,211.2 822.0,211.3 C826.7,211.4 834.0,211.2 840.0,211.0 C846.0,210.8 851.3,211.0 858.0,210.0 C864.7,209.0 871.4,208.3 880.0,204.8 C888.6,201.3 899.7,194.4 909.5,189.0 C919.3,183.6 930.1,176.1 939.0,172.6 C947.9,169.1 956.0,168.6 963.0,168.0 C970.0,167.4 975.0,167.7 981.0,168.8 C987.0,169.9 992.0,171.3 999.0,174.5 C1006.0,177.7 1014.5,183.4 1023.0,188.2 C1031.5,193.0 1040.5,198.2 1050.0,203.3 C1059.5,208.4 1075.0,216.0 1080.0,218.5 Z"/></clipPath><clipPath id="silc"><path d="M415.0,300.0 C415.3,298.5 415.7,293.6 417.0,291.0 C418.3,288.4 420.2,287.4 423.0,284.6 C425.8,281.8 428.3,278.0 434.0,274.0 C439.7,270.0 450.8,264.2 457.0,260.6 C463.2,257.0 467.5,254.0 471.0,252.6 C474.5,251.2 476.2,251.6 478.0,252.0 C479.8,252.4 481.1,253.8 482.0,255.0 C482.9,256.2 483.0,258.3 483.2,259.0 L483,315 C485.6,318.3 491.8,329.1 498.6,335.0 C505.4,340.9 511.9,345.4 524.0,350.6 C536.1,355.8 563.2,363.4 571.0,366.0 L571,195 C573.2,193.7 579.2,190.0 584.0,187.0 C588.8,184.0 595.3,179.7 600.0,177.0 C604.7,174.3 606.2,173.3 612.0,171.0 C617.8,168.7 626.2,164.5 635.0,163.0 C643.8,161.5 655.8,161.7 665.0,162.0 C674.2,162.3 680.8,163.3 690.0,165.0 C699.2,166.7 712.0,169.7 720.0,172.0 C728.0,174.3 728.7,175.3 738.0,179.0 C747.3,182.7 765.8,189.5 776.0,194.0 C786.2,198.5 793.0,203.2 799.0,206.0 C805.0,208.8 808.2,209.6 812.0,210.5 C815.8,211.4 817.3,211.2 822.0,211.3 C826.7,211.4 834.0,211.2 840.0,211.0 C846.0,210.8 851.3,211.0 858.0,210.0 C864.7,209.0 871.4,208.3 880.0,204.8 C888.6,201.3 899.7,194.4 909.5,189.0 C919.3,183.6 930.1,176.1 939.0,172.6 C947.9,169.1 956.0,168.6 963.0,168.0 C970.0,167.4 975.0,167.7 981.0,168.8 C987.0,169.9 992.0,171.3 999.0,174.5 C1006.0,177.7 1014.5,183.4 1023.0,188.2 C1031.5,193.0 1040.5,198.2 1050.0,203.3 C1059.5,208.4 1075.0,216.0 1080.0,218.5 L1080,593 L516,921 L443,875 C436,871 431,866 428.5,860 C427,856 426,854 426,850 L426,698 C423,694 420,689 418,684 C416,679 415,675 415,671 Z"/></clipPath></defs>
<g clip-path="url(#topc)"><path d="M415.0,300.0 C415.7,302.0 416.8,307.5 419.0,312.0 C421.2,316.5 424.3,322.2 428.0,327.0 C431.7,331.8 436.2,336.3 441.0,341.0 C445.8,345.7 452.2,351.2 457.0,355.0 C461.8,358.8 466.2,361.0 470.0,364.0 C473.8,367.0 476.7,370.2 480.0,373.0 C483.3,375.8 487.2,378.0 490.0,381.0 C492.8,384.0 495.0,387.8 497.0,391.0 C499.0,394.2 500.9,397.0 502.0,400.0 C503.1,403.0 503.7,406.2 503.5,409.0 C503.3,411.8 502.2,414.5 501.0,417.0 C499.8,419.5 496.8,422.8 496.0,424.0" fill="none" stroke="#00e200" stroke-width="12" filter="url(#bl15)"/></g>
<g clip-path="url(#topc)"><path d="M432.0,468.0 C431.2,469.7 427.7,474.7 427.0,478.0 C426.3,481.3 426.5,484.5 428.0,488.0 C429.5,491.5 432.3,495.8 436.0,499.0 C439.7,502.2 445.2,504.5 450.0,507.0 C454.8,509.5 458.3,510.7 465.0,514.0 C471.7,517.3 481.5,522.3 490.0,527.0 C498.5,531.7 511.7,539.5 516.0,542.0" fill="none" stroke="#00d800" stroke-width="11" filter="url(#bl15)"/></g>
<g clip-path="url(#topc)"><path d="M450.0,507.0 C452.5,508.2 458.3,510.7 465.0,514.0 C471.7,517.3 481.5,522.3 490.0,527.0 C498.5,531.7 511.7,539.5 516.0,542.0" fill="none" stroke="#00ec00" stroke-width="8" filter="url(#bl1)"/></g>
<g clip-path="url(#topc)"><path d="M496.0,424.0 C494.7,425.1 490.7,428.5 488.0,430.5 C485.3,432.5 483.0,434.2 480.0,436.0 C477.0,437.8 473.3,439.7 470.0,441.5 C466.7,443.3 463.5,444.8 460.0,446.7 C456.5,448.6 452.3,450.8 449.0,453.0 C445.7,455.2 442.8,457.5 440.0,460.0 C437.2,462.5 433.3,466.7 432.0,468.0" fill="none" stroke="#00d000" stroke-width="10" filter="url(#bl2)"/></g>
<g clip-path="url(#silc)"><path d="M501.0,417.0 C500.2,418.2 498.2,421.8 496.0,424.0 C493.8,426.2 490.7,428.5 488.0,430.5 C485.3,432.5 483.0,434.2 480.0,436.0 C477.0,437.8 473.3,439.7 470.0,441.5 C466.7,443.3 463.5,444.8 460.0,446.7 C456.5,448.6 452.3,450.8 449.0,453.0 C445.7,455.2 442.8,457.5 440.0,460.0 C437.2,462.5 434.2,465.0 432.0,468.0 C429.8,471.0 427.8,476.3 427.0,478.0" fill="none" stroke="#00a200" stroke-width="3" filter="url(#bl1)"/></g>
<g clip-path="url(#topc)"><path d="M490,527 L516,542" stroke="#00ff00" stroke-width="5" filter="url(#bl1)"/></g>
<path d="M516,543 L1080,218 L1080,593 L516,921 Z" fill="#004a00"/>
<path d="M516,543 L1080,218" stroke="#000" stroke-width="1.2" fill="none"/>
<path d="M516,541.3 L1080,216.3" stroke="#00ff00" stroke-width="1.2" stroke-dasharray="2 2" fill="none"/>
<path d="M516,921 L1080,593" stroke="#000" stroke-width="1.2" fill="none"/>
<path d="M517,922.5 L1081,594.5" stroke="#00ff00" stroke-width="1.2" stroke-dasharray="2 2" fill="none"/>
<rect x="514" y="543" width="2" height="378" fill="#000"/>
<rect x="1079" y="218" width="1.5" height="375" fill="#000"/>
<defs><linearGradient id="slot" gradientUnits="userSpaceOnUse" x1="1031" y1="418.6" x2="989" y2="491.4"><stop offset="0" stop-color="#009c00"/><stop offset="0.47" stop-color="#00a400"/><stop offset="0.53" stop-color="#00c600"/><stop offset="0.66" stop-color="#00e200"/><stop offset="0.85" stop-color="#00d200"/><stop offset="1" stop-color="#007000"/></linearGradient></defs>
<g transform="translate(0,0)"><path d="M993,488 L993,428 C993,416 1003,404 1012,399.5 C1019,396 1026,399 1027,407 L1027,465 C1025,478 1012,491 1003,495 C997,497 993,494 993,488 Z" fill="url(#slot)" stroke="#000" stroke-width="1.6"/></g>
<g transform="translate(-424.5,244.5)"><path d="M993,488 L993,428 C993,416 1003,404 1012,399.5 C1019,396 1026,399 1027,407 L1027,465 C1025,478 1012,491 1003,495 C997,497 993,494 993,488 Z" fill="url(#slot)" stroke="#000" stroke-width="1.6"/></g>
<rect x="515" y="543" width="2" height="75" fill="#00ff00"/>
<rect x="515" y="845" width="2.2" height="77" fill="#00ff00"/>
<rect x="1080" y="217" width="2" height="75" fill="#00ff00"/>
<path d="M1032,245.5 L1080,218" stroke="#00ff00" stroke-width="1.8"/>
<rect x="1080" y="520" width="1.6" height="75" fill="#00ff00"/>
<rect x="1080" y="555" width="1.6" height="40" fill="#00ff00"/>
<path d="M238,383 L351,318 M238,383 L293,414 M238,383 L238,457" stroke="#00ff00" stroke-width="2.2" fill="none" stroke-linecap="square"/>
<path d="M238,760 L351,696 M238,760 L293,792 M238,760 L238,686" stroke="#00ff00" stroke-width="2.2" fill="none" stroke-linecap="square"/>
<path d="M803,56 L691,121 M803,56 L803,131 M803,56 L858,88" stroke="#00ff00" stroke-width="2.2" fill="none" stroke-linecap="square"/>
<path d="M1079,215.5 L1025.5,184.5" stroke="#00ff00" stroke-width="2.2" fill="none" stroke-linecap="square"/>
<path d="M516,921 L462,889" stroke="#00ff00" stroke-width="2.2" fill="none" stroke-linecap="square"/>
<g shape-rendering="crispEdges"><rect x="654" y="484" width="11" height="11" fill="#000"/><rect x="655" y="485" width="9" height="9" fill="#00ff00"/></g><path d="M46.4,870.6 L73,885.7" stroke="#007a00" stroke-width="1"/><path d="M144.5,870.6 L128,879.5" stroke="#ff0000" stroke-width="1"/><path d="M63,881 C70,876 78,873 86,872.5 L105,872.5 C113,873 121,876 128,880.5 L128,885.7 L118,891.4 L95.5,877.6 L72,890.5 L63,885.7 Z" fill="#6666ff"/><path d="M63,881 C70,876 78,873 86,872.5 L105,872.5 C113,873 121,876 128,880.5 L128,885.7 L118,891.4 M63,881 L63,885.7 L72,890.5" stroke="#0000ff" stroke-width="1" fill="none" stroke-dasharray="1.5 1"/><path d="M86,872.5 L105,872.5" stroke="#0000ff" stroke-width="1.2"/><path d="M72,891 L73,885.7 C74,883 75,881.5 76,880.5 C79,878 84,876 88,875.3 C91,875.5 93,876.5 95.5,877.6 L95.5,896 L90.5,902 Z" fill="#ff6666"/><path d="M72,891 L90.5,902 M90.5,881 L90.5,902 M73,885.7 C74,883 75,881.5 76,880.5 C79,878 84,876 88,875.3 M76,879 L90.5,881 L95.5,877.6" stroke="#ff0000" stroke-width="1" fill="none"/><path d="M95.5,877.6 C98,876 100,875 103,875 C106,876 110,877.5 113,880 C115,882 117,884 117.5,886 L118,891 L100.2,902 L95.5,896 Z" fill="#00ee00"/><path d="M118,891 L100.2,902 M100.2,881 L100.2,902 M95.5,877.6 L100.2,881 L110,878" stroke="#007700" stroke-width="1" fill="none"/><path d="M95.5,842 L95.5,877.6" stroke="#0000ff" stroke-width="1.4"/><circle cx="95.5" cy="899.5" r="5.2" fill="#666"/><text x="91.5" y="834.5" font-family="Liberation Sans" font-size="12" fill="#000">z</text><text x="31.5" y="869" font-family="Liberation Sans" font-size="12" fill="#000">y</text><text x="151.5" y="869.5" font-family="Liberation Sans" font-size="12" fill="#000">x</text></svg><!--/VP-->

<!-- right panel --><!--PANEL--><div class="a" style="left:1335px;top:76px;width:1px;height:914px;background:#fff"></div>
<div class="a" style="left:1335px;top:76px;width:345px;height:1px;background:#fff"></div>
<div class="t" style="left:1352px;top:86px;transform-origin:0 0;transform:rotate(90deg);font-size:11px;line-height:11px">Oblast událostí</div>
<div class="a" style="left:1357px;top:77px;width:323px;height:2px;background:#808080"></div>
<div class="a" style="left:1357px;top:77px;width:2px;height:530px;background:#808080"></div>
<div class="a" style="left:1359px;top:79px;width:321px;height:1px;background:#404040"></div>
<div class="a" style="left:1359px;top:79px;width:1px;height:527px;background:#404040"></div>
<div class="a" style="left:1360px;top:80px;width:319px;height:526px;background:#fff"></div>
<div class="a" style="left:1679px;top:79px;width:1px;height:528px;background:#d4d0c8"></div>
<div class="a" style="left:1359px;top:606px;width:321px;height:1px;background:#d4d0c8"></div>
<div class="a" style="left:1364px;top:85px;width:9px;height:9px;border:1px solid #808080;background:#fff"></div>
<div class="a" style="left:1366px;top:89px;width:5px;height:1px;background:#000"></div>
<div class="a" style="left:1368px;top:87px;width:1px;height:5px;background:#000"></div>
<div class="a" style="left:1374px;top:89px;width:5px;height:1px;border-top:1px dotted #808080"></div>
<div class="a" style="left:1369px;top:95px;width:1px;height:13px;border-left:1px dotted #808080"></div>
<div class="a" style="left:1369px;top:107px;width:10px;height:1px;border-top:1px dotted #808080"></div>
<svg class="a" style="left:1382px;top:80px" width="18" height="18" viewBox="0 0 18 18"><defs><radialGradient id="sph" cx="0.35" cy="0.35" r="0.7"><stop offset="0" stop-color="#fff"/><stop offset="1" stop-color="#888"/></radialGradient><radialGradient id="sphd" cx="0.35" cy="0.35" r="0.7"><stop offset="0" stop-color="#aaa"/><stop offset="1" stop-color="#333"/></radialGradient></defs><circle cx="6" cy="6" r="5" fill="url(#sphd)"/><circle cx="11.5" cy="10" r="5.3" fill="url(#sph)"/><circle cx="5.5" cy="13" r="4.5" fill="url(#sph)"/></svg>
<div class="t" style="left:1404px;top:84px;font-weight:bold;font-size:12px;line-height:13px">Objekty</div>
<svg class="a" style="left:1382px;top:100px" width="17" height="15" viewBox="0 0 17 15"><rect x="0" y="0" width="16" height="2" fill="#666"/><rect x="0" y="3" width="16" height="2" fill="#333"/><rect x="0" y="6" width="16" height="2" fill="#333"/><rect x="0" y="9" width="16" height="2" fill="#333"/><rect x="0" y="12" width="16" height="2" fill="#333"/></svg>
<div class="t" style="left:1404px;top:101px;font-weight:bold;font-size:12px;line-height:13px">Řezy</div>
<svg class="a" style="left:1660px;top:83px" width="17" height="13" viewBox="0 0 17 13"><path d="M1,2 L5,2 L6,3.5 L10,3.5 L10,11 L1,11 Z" fill="#f7a030"/><path d="M2.5,6 L13,6 L10.5,11.5 L1,11.5 Z" fill="#ff8c10"/><path d="M9,4 C11,1 14,1 15.5,4 L14,5.5 L13.5,3.5 C12.5,2.5 11,2.5 10,4.5 Z" fill="#777"/></svg>
<svg class="a" style="left:1660px;top:101px" width="17" height="13" viewBox="0 0 17 13"><path d="M1,2 L5,2 L6,3.5 L10,3.5 L10,11 L1,11 Z" fill="#f7a030"/><path d="M2.5,6 L13,6 L10.5,11.5 L1,11.5 Z" fill="#ff8c10"/><path d="M9,4 C11,1 14,1 15.5,4 L14,5.5 L13.5,3.5 C12.5,2.5 11,2.5 10,4.5 Z" fill="#777"/></svg>
<div class="a" style="left:1357px;top:607px;width:323px;height:3px;background:#fff"></div>
<div class="a" style="left:1357px;top:607px;width:2px;height:381px;background:#fff"></div>
<div class="a" style="left:1334px;top:988px;width:346px;height:1px;background:#808080"></div>
<div class="a" style="left:1356px;top:607px;width:1px;height:381px;background:#d4d0c8"></div>
<div class="a" style="left:1362px;top:622px;width:313px;height:147px;border:1px solid #808080;box-shadow:inset 1px 1px 0 #fff, 1px 1px 0 #fff"></div>
<div class="a" style="left:1369px;top:616px;width:30px;height:12px;background:#d4d0c8"></div>
<div class="t" style="left:1371px;top:615px;">Řezy</div>
<div class="t" style="left:1372px;top:638px;">X:</div>
<div class="a" style="left:1388px;top:637px;width:24px;height:14px;border:2px solid #ff9400;border-radius:4px;background:#e6e6ea"></div>
<div class="a" style="left:1420px;top:635px;width:172px;height:17px;background-color:#eae8e4;background-image:conic-gradient(#d4d0c8 25%,#fff 0 50%,#d4d0c8 0 75%,#fff 0);background-size:2px 2px"></div>
<div class="btn" style="left:1420px;top:635px;width:16px;height:17px"></div>
<div class="btn" style="left:1436px;top:635px;width:16px;height:17px"></div>
<div class="btn" style="left:1576px;top:635px;width:16px;height:17px"></div>
<svg class="a" style="left:1425px;top:639px" width="6" height="9"><path d="M4,0 L4,8 L0,4 Z" fill="#000"/></svg>
<svg class="a" style="left:1582px;top:639px" width="6" height="9"><path d="M0,0 L0,8 L4,4 Z" fill="#000"/></svg>
<div class="field" style="left:1598px;top:634px;width:45px;height:21px"></div>
<div class="t" style="left:1604px;top:638px;">0.00</div>
<div class="t" style="left:1647px;top:638px;">mm</div>
<div class="t" style="left:1372px;top:664px;">Y:</div>
<div class="a" style="left:1388px;top:663px;width:24px;height:14px;border:2px solid #ff9400;border-radius:4px;background:#e6e6ea"></div>
<div class="a" style="left:1420px;top:661px;width:172px;height:17px;background-color:#eae8e4;background-image:conic-gradient(#d4d0c8 25%,#fff 0 50%,#d4d0c8 0 75%,#fff 0);background-size:2px 2px"></div>
<div class="btn" style="left:1420px;top:661px;width:16px;height:17px"></div>
<div class="btn" style="left:1436px;top:661px;width:16px;height:17px"></div>
<div class="btn" style="left:1576px;top:661px;width:16px;height:17px"></div>
<svg class="a" style="left:1425px;top:665px" width="6" height="9"><path d="M4,0 L4,8 L0,4 Z" fill="#000"/></svg>
<svg class="a" style="left:1582px;top:665px" width="6" height="9"><path d="M0,0 L0,8 L4,4 Z" fill="#000"/></svg>
<div class="field" style="left:1598px;top:660px;width:45px;height:21px"></div>
<div class="t" style="left:1604px;top:664px;">0.00</div>
<div class="t" style="left:1647px;top:664px;">mm</div>
<div class="t" style="left:1372px;top:690px;">Z:</div>
<div class="a" style="left:1388px;top:689px;width:24px;height:14px;border:2px solid #ff9400;border-radius:4px;background:#e6e6ea"></div>
<div class="a" style="left:1420px;top:687px;width:172px;height:17px;background-color:#eae8e4;background-image:conic-gradient(#d4d0c8 25%,#fff 0 50%,#d4d0c8 0 75%,#fff 0);background-size:2px 2px"></div>
<div class="btn" style="left:1420px;top:687px;width:16px;height:17px"></div>
<div class="btn" style="left:1436px;top:687px;width:16px;height:17px"></div>
<div class="btn" style="left:1576px;top:687px;width:16px;height:17px"></div>
<svg class="a" style="left:1425px;top:691px" width="6" height="9"><path d="M4,0 L4,8 L0,4 Z" fill="#000"/></svg>
<svg class="a" style="left:1582px;top:691px" width="6" height="9"><path d="M0,0 L0,8 L4,4 Z" fill="#000"/></svg>
<div class="field" style="left:1598px;top:686px;width:45px;height:21px"></div>
<div class="t" style="left:1604px;top:690px;">0.00</div>
<div class="t" style="left:1647px;top:690px;">mm</div>
<div class="field" style="left:1372px;top:714px;width:294px;height:21px"></div>
<div class="t" style="left:1376px;top:719px;">&lt;řezání vypnuto&gt;</div>
<div class="btn" style="left:1648px;top:716px;width:16px;height:17px"></div>
<svg class="a" style="left:1652px;top:723px" width="9" height="5"><path d="M0,0 L8,0 L4,4 Z" fill="#000"/></svg>
<div class="btn" style="left:1433px;top:740px;width:114px;height:22px;color:#808080;line-height:19px;text-shadow:1px 1px 0 #fff">Provést řez</div>
<div class="btn" style="left:1554px;top:740px;width:114px;height:22px;line-height:19px">Reset</div>
<div class="a" style="left:1362px;top:778px;width:314px;height:88px;border:1px solid #808080;box-shadow:inset 1px 1px 0 #fff, 1px 1px 0 #fff"></div>
<div class="a" style="left:1369px;top:772px;width:52px;height:12px;background:#d4d0c8"></div>
<div class="t" style="left:1371px;top:771px;">Informace</div>
<div class="t" style="left:1372px;top:794px;">Délka:</div>
<div class="field" style="left:1416px;top:790px;width:53px;height:21px;overflow:hidden"><div class="t" style="right:4px;top:3px;letter-spacing:0.2px">50000.00</div></div>
<div class="t" style="left:1476px;top:794px;">mm</div>
<div class="t" style="left:1510px;top:794px;">Obsah:</div>
<div class="field" style="left:1580px;top:790px;width:63px;height:21px;overflow:hidden"><div class="t" style="right:4px;top:3px;letter-spacing:0.2px">0875243.52</div></div>
<div class="t" style="left:1647px;top:793px;">cm³</div>
<div class="t" style="left:1372px;top:818px;">Šířka:</div>
<div class="field" style="left:1416px;top:814px;width:53px;height:21px;overflow:hidden"><div class="t" style="right:4px;top:3px;letter-spacing:0.2px">24500.00</div></div>
<div class="t" style="left:1476px;top:818px;">mm</div>
<div class="t" style="left:1510px;top:818px;">Plocha:</div>
<div class="field" style="left:1580px;top:814px;width:63px;height:21px;overflow:hidden"><div class="t" style="right:4px;top:3px;letter-spacing:0.2px">6259906.56</div></div>
<div class="t" style="left:1647px;top:817px;">cm²</div>
<div class="t" style="left:1372px;top:842px;">Výška:</div>
<div class="field" style="left:1416px;top:838px;width:53px;height:21px;overflow:hidden"><div class="t" style="right:4px;top:3px;letter-spacing:0.2px">29000.00</div></div>
<div class="t" style="left:1476px;top:842px;">mm</div>
<div class="t" style="left:1510px;top:842px;">Trojúhelníky:</div>
<div class="field" style="left:1580px;top:838px;width:63px;height:21px;overflow:hidden"><div class="t" style="right:4px;top:3px;letter-spacing:0.2px">7632</div></div>
<div class="a" style="left:1362px;top:874px;width:315px;height:23px;border:1px solid #808080;box-shadow:inset 1px 1px 0 #fff, 1px 1px 0 #fff"></div>
<div class="t" style="left:1362px;top:878px;width:315px;text-align:center">1 z 1 objekt vybrán.</div>
<div class="a" style="left:1417px;top:922px;width:203px;height:39px;border-radius:13px;background:linear-gradient(to bottom,#0a5cae 0%,#004f9c 45%,#003a7a 100%);box-shadow:0 0 0 1px #1a4a80"></div>
<div class="t" style="left:1417px;top:929px;width:203px;text-align:center;color:#fff;font-style:italic;font-size:21px;line-height:24px">Provést upgrade!</div><!--/PANEL-->
<!-- status bar --><!--BOTTOM--><svg class="a" style="left:6px;top:992px" width="13" height="13"><path d="M4,0.5 L8.5,0.5 L12,4 L12,8.5 L8.5,12 L4,12 L0.5,8.5 L0.5,4 Z" fill="#ff0000" stroke="#c00000" stroke-width="0.6"/></svg>
<div class="a" style="left:23px;top:992px;width:199px;height:15px;border-top:1px solid #808080;border-left:1px solid #808080;border-right:1px solid #fff"></div>
<div class="t" style="left:25px;top:995px;line-height:13px">rotace/přesun</div>
<div class="a" style="left:223px;top:992px;width:499px;height:15px;border-top:1px solid #808080;border-left:1px solid #808080;border-right:1px solid #fff"></div>
<div class="t" style="left:225px;top:995px;line-height:13px">rotace/ přesum vybraných objektů pomocí myši či kurzorových kláves</div>
<div class="a" style="left:723px;top:992px;width:957px;height:15px;border-top:1px solid #808080;border-left:1px solid #808080;border-right:1px solid #fff"></div>
<div class="a" style="left:748px;top:995px;width:909px;height:12px;border-top:1px solid #808080;border-left:1px solid #808080;border-right:1px solid #fff"></div>
<svg class="a" style="left:1668px;top:995px" width="12" height="12"><path d="M11,1 L1,11 M11,5 L5,11 M11,9 L9,11" stroke="#808080" stroke-width="1"/><path d="M11,2 L2,11 M11,6 L6,11 M11,10 L10,11" stroke="#fff" stroke-width="1"/></svg>
<div class="a" style="left:0px;top:1007px;width:1680px;height:1px;background:#fff"></div>
<div class="a" style="left:2px;top:1010px;width:52px;height:38px;background:#d4d0c8;border-top:1px solid #fff;border-left:1px solid #fff;border-right:1px solid #404040;border-bottom:1px solid #404040;box-shadow:inset -1px -1px 0 #808080"></div>
<svg class="a" style="left:4px;top:1021px" width="17" height="17" viewBox="0 0 17 17"><path d="M1,3 C3,1.5 5,1.5 8,3 L7,7.5 C5,6 3,6 1,7.5 Z" fill="#f25022"/><path d="M9,3 C11,4.5 13,4.5 16,3 L15,7.5 C13,9 11,9 8,7.5 Z" fill="#7fba00"/><path d="M0.5,9 C2.5,7.5 4.5,7.5 7,9 L6,13.5 C4,12 2,12 0,13.5 Z" fill="#00a4ef"/><path d="M8,9 C10,10.5 12,10.5 15,9 L14,13.5 C12,15 10,15 7,13.5 Z" fill="#ffb900"/></svg>
<div class="t" style="left:21px;top:1022px;font-weight:bold;font-size:13px;line-height:15px">Start</div>
<svg class="a" style="left:72px;top:1012px" width="31" height="32" viewBox="0 0 31 32"><defs><linearGradient id="ieg" x1="0" y1="0" x2="0" y2="1"><stop offset="0" stop-color="#7ad0f6"/><stop offset="1" stop-color="#1e88d8"/></linearGradient></defs><path d="M15,6 C22,6 26,11 26,18 L10,18 C10,22 13,25 17,25 C20,25 22,24 24,22 L25.5,25.5 C23,28 20,29 16,29 C9,29 5,24 5,17.5 C5,11 9,6 15,6 Z M10.5,14.5 L21,14.5 C20.5,11.5 18.5,9.5 15.5,9.5 C12.5,9.5 11,11.5 10.5,14.5 Z" fill="url(#ieg)"/><path d="M3,26 C0,21 8,8 20,3 C27,0 31,2 29,8 C28,4 24,3 19,6 C9,11 3,20 5,28 C4,28 3.5,27 3,26 Z" fill="#f5c300"/></svg>
<svg class="a" style="left:121px;top:1015px" width="33" height="31" viewBox="0 0 33 31"><path d="M1,3 L10,3 L12,5 L30,5 L31,25 L2,25 Z" fill="#e8c864"/><rect x="5" y="1" width="22" height="6" fill="#fff" stroke="#ccc" stroke-width="0.5"/><rect x="6" y="1.5" width="3" height="2" fill="#2a2"/><rect x="13" y="3" width="3" height="2" fill="#d22"/><rect x="20" y="4" width="3" height="2" fill="#28d"/><path d="M1,8 L32,8 L31,25 L2,25 Z" fill="#f4dc8c"/><path d="M5,16 L28,16 L28,30 L23,30 L23,22 L10,22 L10,30 L5,30 Z" fill="#8cc8ec" stroke="#4a90c8" stroke-width="0.7"/></svg>
<svg class="a" style="left:172px;top:1017px" width="31" height="27" viewBox="0 0 31 27"><rect x="6" y="1" width="22" height="24" fill="#c8ddf0" stroke="#8ab" stroke-width="0.6"/><rect x="2" y="0.5" width="22" height="24" fill="#b8d4ee" stroke="#7aa" stroke-width="0.6"/><circle cx="12.5" cy="12" r="8.5" fill="#f07c1c"/><path d="M9.5,7 L17.5,12 L9.5,17 Z" fill="#fff"/></svg>
<div class="a" style="left:213px;top:1010px;width:48px;height:38px;background:#d4d0c8;border-top:1px solid #fff;border-left:1px solid #fff;border-right:1px solid #404040;border-bottom:1px solid #404040;box-shadow:inset -1px -1px 0 #808080"></div>
<svg class="a" style="left:221px;top:1012px" width="32" height="33" viewBox="0 0 32 33"><rect x="1" y="1" width="30" height="31" rx="4" fill="#1669e8"/><path d="M7,11 L25,11 L25,24 L21,24 L21,15 L11,15 L11,24 L7,24 Z M14,18 L18,18 L18,24 L14,24 Z" fill="#fff"/></svg>
<svg class="a" style="left:275px;top:1014px" width="24" height="30" viewBox="0 0 24 30"><rect x="0.5" y="0.5" width="23" height="29" rx="2" fill="#cfe4f6" stroke="#6a9cc8"/><rect x="3" y="3" width="18" height="7" fill="#eef6fc" stroke="#7aa"/><rect x="3" y="2.5" width="18" height="1.2" fill="#f0a020"/><rect x="3.0" y="12" width="3" height="2.2" fill="#8ab4d8"/><rect x="3.0" y="16" width="3" height="2.2" fill="#8ab4d8"/><rect x="3.0" y="20" width="3" height="2.2" fill="#8ab4d8"/><rect x="3.0" y="24" width="3" height="2.2" fill="#8ab4d8"/><rect x="7.2" y="12" width="3" height="2.2" fill="#8ab4d8"/><rect x="7.2" y="16" width="3" height="2.2" fill="#8ab4d8"/><rect x="7.2" y="20" width="3" height="2.2" fill="#8ab4d8"/><rect x="7.2" y="24" width="3" height="2.2" fill="#8ab4d8"/><rect x="11.4" y="12" width="3" height="2.2" fill="#8ab4d8"/><rect x="11.4" y="16" width="3" height="2.2" fill="#8ab4d8"/><rect x="11.4" y="20" width="3" height="2.2" fill="#8ab4d8"/><rect x="11.4" y="24" width="3" height="2.2" fill="#8ab4d8"/><rect x="15.600000000000001" y="12" width="3" height="2.2" fill="#8ab4d8"/><rect x="15.600000000000001" y="16" width="3" height="2.2" fill="#8ab4d8"/><rect x="15.600000000000001" y="20" width="3" height="2.2" fill="#8ab4d8"/><rect x="15.600000000000001" y="24" width="3" height="2.2" fill="#8ab4d8"/><rect x="19.5" y="20" width="1.5" height="6" fill="#f08000"/></svg>
<svg class="a" style="left:321px;top:1012px" width="32" height="33" viewBox="0 0 32 33"><path d="M1,1 L29,1 L31,3 L31,32 L1,32 Z" fill="#1a44c8"/><rect x="9" y="1" width="14" height="9" fill="#d8d8e8"/><rect x="18" y="2.5" width="3" height="6" fill="#1a44c8"/><rect x="5" y="15" width="22" height="15" fill="#fff"/><rect x="6" y="18" width="20" height="1.2" fill="#d22"/><rect x="6" y="22" width="20" height="1.2" fill="#d22"/><rect x="6" y="26" width="20" height="1.2" fill="#d22"/><rect x="5" y="29" width="22" height="2" fill="#d22"/></svg>
<svg class="a" style="left:371px;top:1012px" width="33" height="32" viewBox="0 0 33 32"><rect x="1" y="1" width="26" height="27" rx="2" fill="#fde8b0" stroke="#f0a030" stroke-width="1.4"/><path d="M6,10 L31,8 L32,23 L8,27 Z" fill="#f8f8f8" stroke="#d0b070" stroke-width="0.6"/><circle cx="16.5" cy="19" r="8.5" fill="#f8c830" stroke="#e09010" stroke-width="0.8"/><path d="M12,17 L16.5,21 L21,15" stroke="#a86800" stroke-width="1.5" fill="none"/></svg>
<div class="a" style="left:413px;top:1010px;width:48px;height:38px;background:#d4d0c8;border-top:1px solid #fff;border-left:1px solid #fff;border-right:1px solid #404040;border-bottom:1px solid #404040;box-shadow:inset -1px -1px 0 #808080"></div>
<svg class="a" style="left:425px;top:1012px" width="26" height="32" viewBox="0 0 26 32"><defs><radialGradient id="sgr" cx="0.4" cy="0.3" r="0.8"><stop offset="0" stop-color="#b0b040"/><stop offset="1" stop-color="#5a5a10"/></radialGradient></defs><path d="M13,1 C22,1 25,5 23,9 C20,14 6,13 3,20 C1,26 6,31 13,31 C6,31 1,27 1,22 C1,15 6,14 12,12 C17,10 20,8 19,5 C18,2 15,1 13,1 Z" fill="url(#sgr)"/><ellipse cx="11" cy="9" rx="9" ry="8" fill="url(#sgr)"/><ellipse cx="15" cy="23" rx="9" ry="8" fill="url(#sgr)"/><path d="M1,29 L24,5" stroke="#e8f020" stroke-width="1.6"/></svg>
<div class="a" style="left:463px;top:1010px;width:48px;height:38px;background-color:#fff;background-image:conic-gradient(#f4f4f4 25%,#fff 0 50%,#f4f4f4 0 75%,#fff 0);background-size:2px 2px;border-top:1px solid #404040;border-left:1px solid #404040;border-right:1px solid #fff;border-bottom:1px solid #fff;box-shadow:inset 1px 1px 0 #808080"></div>
<svg class="a" style="left:471px;top:1014px" width="32" height="28" viewBox="0 0 32 28"><path d="M12,1 L17,2 L18,5 L13,4 Z" fill="#0a5fa0"/><path d="M1,8 L5,6 L7,11 L3,13 Z" fill="#0a5fa0"/><path d="M23,10 L28,9 L27,15 L23,14 Z" fill="#0a5fa0"/><path d="M6,20 L10,18 L12,22 L8,25 Z" fill="#0a5fa0"/><path d="M11,10 L17,8 L19,13 L13,15 Z" fill="#e0157a"/></svg>
<div class="t" style="left:1362px;top:1019px;font-size:11.5px;line-height:14px;letter-spacing:-0.3px">CS</div>
<div class="a" style="left:1381px;top:1016px;width:1px;height:22px;background:#808080;box-shadow:1px 0 0 #fff"></div>
<svg class="a" style="left:1389px;top:1019px" width="17" height="16" viewBox="0 0 17 16"><path d="M6,4 L9,2 L12,4 L15,1" stroke="#888" stroke-width="1.2" fill="none"/><rect x="0.5" y="6" width="15.5" height="9" rx="1.5" fill="#e8e8e8" stroke="#888"/><path d="M3,9 L13,9 M3,11 L13,11 M4,13 L12,13" stroke="#999" stroke-width="1" stroke-dasharray="1 1"/></svg>
<div class="a" style="left:1409px;top:1016px;width:1px;height:22px;background:#808080;box-shadow:1px 0 0 #fff"></div>
<div class="a" style="left:1412px;top:1010px;width:265px;height:38px;border-top:1px solid #808080;border-left:1px solid #808080;border-right:1px solid #fff;border-bottom:1px solid #fff"></div>
<svg class="a" style="left:1418px;top:1022px" width="8" height="10"><path d="M1,4 L3.5,1.5 L6,4 M1,8 L3.5,5.5 L6,8" stroke="#000" stroke-width="1.5" fill="none"/></svg>
<svg class="a" style="left:1434px;top:1021px" width="18" height="17" viewBox="0 0 18 17"><path d="M1,3 L7.5,2 L7.5,8 L1,8 Z M8.5,2 L17,1 L17,8 L8.5,8 Z M1,9 L7.5,9 L7.5,15 L1,14 Z M8.5,9 L17,9 L17,16 L8.5,15 Z" fill="#fff" stroke="#aaa" stroke-width="0.7"/></svg>
<svg class="a" style="left:1458px;top:1021px" width="17" height="17" viewBox="0 0 17 17"><circle cx="8.5" cy="8.5" r="8" fill="#ff9a00"/><path d="M11.5,11.5 C8,13 4.5,11 4.5,8 C4.5,5 7,3.5 9,3.5 C11.5,3.5 13,5.5 12.5,8" stroke="#fff" stroke-width="2.2" fill="none"/></svg>
<svg class="a" style="left:1483px;top:1021px" width="17" height="17" viewBox="0 0 17 17"><rect x="0.5" y="0.5" width="16" height="16" rx="1.5" fill="#222a22"/><path d="M2,10 C4,5 10,4 13,8 C10,12 5,12 4,9 C6,7 9,7 10,9" stroke="#76b900" stroke-width="1.6" fill="none"/><rect x="13" y="9" width="2.5" height="7" fill="#ffe000"/></svg>
<svg class="a" style="left:1506px;top:1021px" width="18" height="17" viewBox="0 0 18 17"><rect x="3" y="0.5" width="5" height="5" fill="#ddd" stroke="#888" stroke-width="0.6"/><path d="M2,5 L9,5 L9,12 L7,14 L7,17 L4,17 L4,14 L2,12 Z" fill="#666"/><circle cx="12" cy="11.5" r="5" fill="#22a022"/><path d="M9.5,11.5 L11.5,13.5 L14.5,9" stroke="#fff" stroke-width="1.4" fill="none"/></svg>
<svg class="a" style="left:1531px;top:1021px" width="17" height="17" viewBox="0 0 17 17"><path d="M4,1 L8,3.5 L4,6 L0,3.5 Z M12,1 L16,3.5 L12,6 L8,3.5 Z M4,6 L8,8.5 L4,11 L0,8.5 Z M12,6 L16,8.5 L12,11 L8,8.5 Z M8,9 L12,11.5 L8,14 L4,11.5 Z" fill="#fff" stroke="#888" stroke-width="0.7"/><circle cx="12" cy="12" r="4.5" fill="#22a022"/><path d="M10,12 L11.5,13.5 L14,10.5" stroke="#fff" stroke-width="1.3" fill="none"/></svg>
<svg class="a" style="left:1555px;top:1021px" width="17" height="17" viewBox="0 0 17 17"><rect x="5" y="3" width="11" height="9" fill="#aaa" stroke="#eee" stroke-width="1"/><path d="M9,13 L12,13 L12,15 L7,15" stroke="#eee" stroke-width="1.4" fill="none"/><path d="M2,0.5 L2,4 M4,0.5 L4,4 M1,4 L5,4 L5,6 L3,7 L3,16 L4,16" stroke="#eee" stroke-width="1.1" fill="none"/></svg>
<svg class="a" style="left:1579px;top:1021px" width="17" height="17" viewBox="0 0 17 17"><path d="M1,6 L4,6 L8,1.5 L8,15.5 L4,11 L1,11 Z" fill="#fff" stroke="#999" stroke-width="0.8"/><path d="M10,6 C11,7.5 11,9.5 10,11 M12,4 C14,6.5 14,10.5 12,13 M14,2.5 C17,6 17,11 14,14.5" stroke="#999" stroke-width="0.9" fill="none"/></svg>
<div class="t" style="left:1616px;top:1015.5px;line-height:13px">23:53</div>
<div class="t" style="left:1606px;top:1031px;line-height:13px">7.12.2015</div>
<svg class="a" style="left:1660px;top:1023px" width="16" height="13" viewBox="0 0 16 13"><defs><linearGradient id="dsk" x1="0" y1="0" x2="1" y2="1"><stop offset="0" stop-color="#1a50c0"/><stop offset="1" stop-color="#60a8f0"/></linearGradient></defs><rect x="0.5" y="0.5" width="15" height="12" fill="url(#dsk)" stroke="#8ab0d8" stroke-width="0.6"/><rect x="1" y="9.5" width="14" height="2" fill="#222"/></svg><!--/BOTTOM-->
</body></html>
